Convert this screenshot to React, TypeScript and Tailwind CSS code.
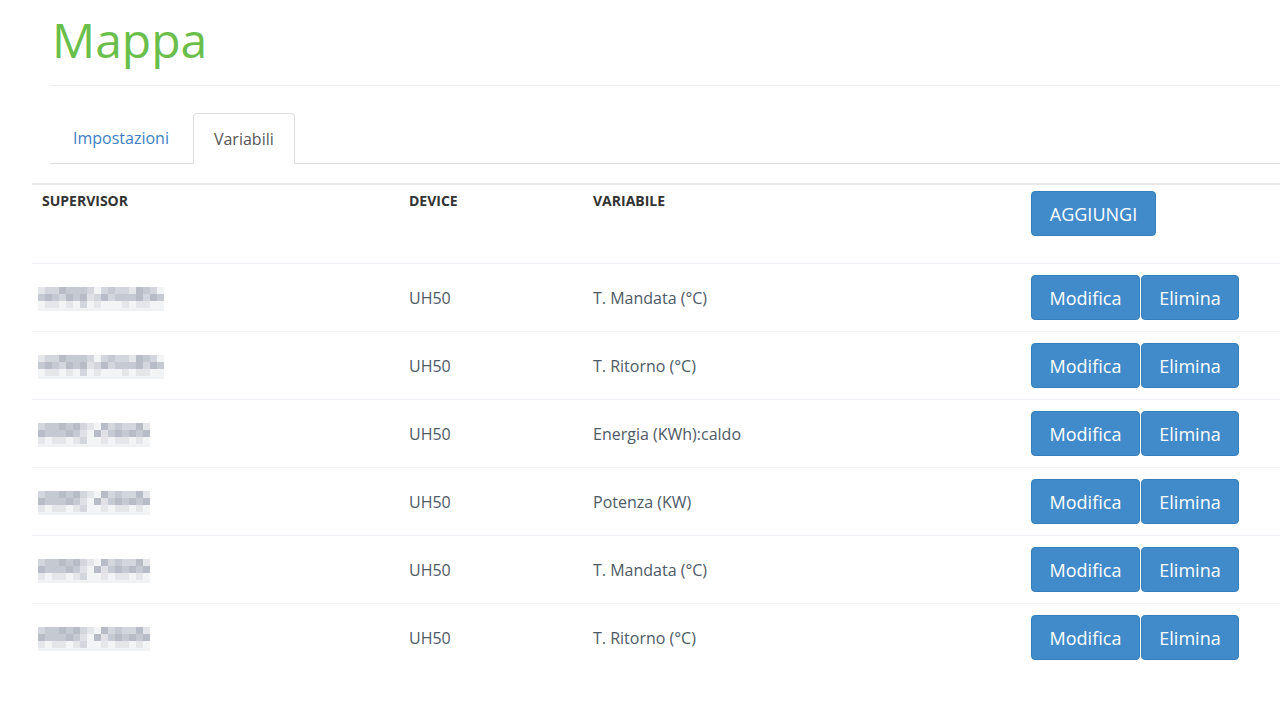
import React from "react";

const font = "[font-family:'Open_Sans',Roboto,sans-serif]";

// pixelated, blurred-out supervisor names
const shades = ["#f3f4f6", "#e4e6ea", "#d3d6dd", "#c5c9d2", "#b7bcc7", "#dfe1e6"];

function Redacted({ pattern }: { pattern: string[] }) {
  return (
    <div className="inline-flex flex-col">
      {pattern.map((row, r) => (
        <div key={r} className="flex">
          {row.split("").map((c, i) => (
            <span
              key={i}
              className="block w-[7px] h-[7px]"
              style={{ backgroundColor: shades[Number(c)] }}
            />
          ))}
        </div>
      ))}
      <div className="h-[3px] bg-[#f1f2f4]" />
    </div>
  );
}

const longName = ["122433320232214320", "343243452423334243", "011010201000101100"];
const shortName = ["2334342104232241", "4333435045343434", "1011012001011010"];

const rows = [
  { name: longName, device: "UH50", variable: "T. Mandata (°C)" },
  { name: longName, device: "UH50", variable: "T. Ritorno (°C)" },
  { name: shortName, device: "UH50", variable: "Energia (KWh):caldo" },
  { name: shortName, device: "UH50", variable: "Potenza (KW)" },
  { name: shortName, device: "UH50", variable: "T. Mandata (°C)" },
  { name: shortName, device: "UH50", variable: "T. Ritorno (°C)" },
];

function Btn({ children, w }: { children: React.ReactNode; w: string }) {
  return (
    <button
      className={`${w} h-[45px] rounded-[4px] bg-[#428bca] border border-[#357ebd] text-white text-[18px] leading-none flex items-center justify-center`}
    >
      {children}
    </button>
  );
}

export default function App() {
  return (
    <div className={`${font} bg-white min-h-[707px] w-[1280px] overflow-hidden`}>
      <div className="ml-[50px] pt-[12px]">
        <h1 className="text-[48px] leading-[56px] text-[#6abf4b] pl-[2px] pb-[17px] border-b border-[#eeeeee]">
          Mappa
        </h1>
        <div className="mt-[27px] flex items-end border-b border-[#dddddd] h-[51px]">
          <div className="ml-[3px] px-5 h-[50px] flex items-center text-[16px] text-[#3b7fc4] mr-[4px]">
            Impostazioni
          </div>
          <div className="px-5 h-[51px] -mb-px flex items-center text-[16px] text-[#555555] bg-white border border-[#dddddd] border-b-white rounded-t-[4px]">
            Variabili
          </div>
        </div>
      </div>

      <div className="ml-[32px] mt-[19px] border-t-2 border-[#e8e8e8]">
        <div className="grid grid-cols-[367px_184px_438px_1fr] h-[79px] border-b border-[#eef1f5] text-[14px] font-bold text-[#333333]">
          <div className="pl-[10px] pt-[5px]">SUPERVISOR</div>
          <div className="pl-[10px] pt-[5px]">DEVICE</div>
          <div className="pl-[10px] pt-[5px]">VARIABILE</div>
          <div className="pl-[10px] pt-[6px] font-normal">
            <Btn w="w-[125px]">AGGIUNGI</Btn>
          </div>
        </div>
        {rows.map((row, i) => (
          <div
            key={i}
            className={`grid grid-cols-[367px_184px_438px_1fr] h-[68px] items-center text-[16px] text-[#4e5a66] border-b ${
              i < rows.length - 1 ? "border-[#eef1f5]" : "border-transparent"
            }`}
          >
            <div className="pl-[6px] pt-[2px] flex">
              <Redacted pattern={row.name} />
            </div>
            <div className="pl-[10px]">{row.device}</div>
            <div className="pl-[10px]">{row.variable}</div>
            <div className="pl-[10px] flex gap-px">
              <Btn w="w-[109px]">Modifica</Btn>
              <Btn w="w-[98px]">Elimina</Btn>
            </div>
          </div>
        ))}
      </div>
    </div>
  );
}
